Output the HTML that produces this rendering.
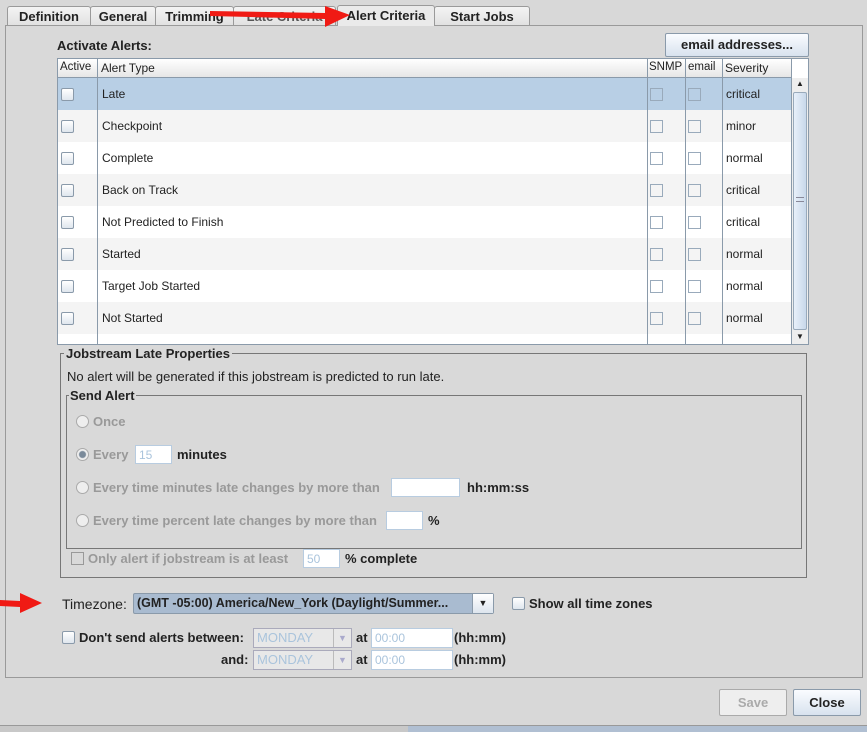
<!DOCTYPE html>
<html><head><meta charset="utf-8">
<style>
*{box-sizing:border-box;margin:0;padding:0}
body{width:867px;height:732px;background:#d8d8d8;font-family:"Liberation Sans",sans-serif;font-size:13px;color:#222;position:relative;overflow:hidden}
.a{position:absolute}
.b{font-weight:bold}
.t{font-size:12px}
.tab{position:absolute;top:6px;height:20px;border:1px solid #9a9a9a;border-bottom:none;background:linear-gradient(#f4f4f4,#e0e0e0);font-weight:bold;font-size:13px;text-align:center;line-height:19px;border-radius:3px 3px 0 0}
.cb{position:absolute;width:13px;height:13px;border:1px solid #8a9aaa;background:linear-gradient(#fff,#dfe6ee);border-radius:2px}
.cbd{position:absolute;width:13px;height:13px;border:1px solid #9ab;background:transparent}
.row{position:absolute;left:58px;width:733px;height:32px}
.gr{color:#999;font-weight:bold}
.rad{position:absolute;width:13px;height:13px;border:1px solid #aaa;border-radius:50%;background:#eee}
.inp{position:absolute;background:#fff;border:1px solid #b8cce0;color:#aac4dc;padding-left:3px;line-height:18px;font-size:12px}
.btn{position:absolute;border:1px solid #8a9aaa;background:linear-gradient(#fafcff,#d8e2ee);font-weight:bold;font-size:13px;text-align:center;border-radius:2px}
</style></head><body>
<div class="tab" style="left:7px;width:84px">Definition</div>
<div class="tab" style="left:90px;width:66px">General</div>
<div class="tab" style="left:155px;width:79px">Trimming</div>
<div class="tab" style="left:233px;width:103px;color:#555">Late Criteria</div>
<div class="tab" style="left:434px;width:96px">Start Jobs</div>
<div class="a" style="left:5px;top:25px;width:858px;height:653px;border:1px solid #9a9a9a;background:#d9d9d9"></div>
<div class="tab" style="left:337px;top:5px;height:21px;width:98px;background:#eaeaea;border-color:#9a9a9a;z-index:2">Alert Criteria</div>
<div class="a b" style="left:57px;top:38px;font-size:13px">Activate Alerts:</div>
<div class="btn" style="left:665px;top:33px;width:144px;height:24px;line-height:22px">email addresses...</div>
<div class="a" style="left:57px;top:58px;width:752px;height:287px;border:1px solid #8a9aaa;background:#fff"></div>
<div class="a" style="left:58px;top:59px;width:733px;height:19px;background:linear-gradient(#fff,#e6e6e6);border-bottom:1px solid #8a9aaa"></div>
<div class="a" style="left:60px;top:61px;font-size:11.5px">Active</div>
<div class="a t" style="left:101px;top:61px">Alert Type</div>
<div class="a" style="left:649px;top:61px;font-size:11.5px">SNMP</div>
<div class="a" style="left:688px;top:61px;font-size:11.5px">email</div>
<div class="a t" style="left:725px;top:61px">Severity</div>
<div class="row" style="top:78px;background:#b8cfe5"></div>
<div class="row" style="top:110px;background:#f4f4f4"></div>
<div class="row" style="top:142px;background:#fff"></div>
<div class="row" style="top:174px;background:#f4f4f4"></div>
<div class="row" style="top:206px;background:#fff"></div>
<div class="row" style="top:238px;background:#f4f4f4"></div>
<div class="row" style="top:270px;background:#fff"></div>
<div class="row" style="top:302px;background:#f4f4f4"></div>
<div class="row" style="top:334px;height:10px;background:#fff"></div>
<div class="a" style="left:97px;top:59px;width:1px;height:285px;background:#8a9aaa"></div>
<div class="a" style="left:647px;top:59px;width:1px;height:285px;background:#8a9aaa"></div>
<div class="a" style="left:685px;top:59px;width:1px;height:285px;background:#8a9aaa"></div>
<div class="a" style="left:722px;top:59px;width:1px;height:285px;background:#8a9aaa"></div>
<div class="a" style="left:791px;top:59px;width:1px;height:285px;background:#8a9aaa"></div>
<div class="a" style="left:792px;top:78px;width:16px;height:266px;background:#eee"></div>
<div class="a" style="left:793px;top:92px;width:14px;height:238px;border:1px solid #9ab;background:linear-gradient(90deg,#e8f0fa,#c8d8ea);border-radius:2px"></div>
<div class="a" style="left:796px;top:79px;font-size:8px">▲</div>
<div class="a" style="left:796px;top:332px;font-size:8px">▼</div>
<div class="a" style="left:796px;top:197px;width:8px;height:5px;border-top:1px solid #889;border-bottom:1px solid #889"></div>
<div class="cb" style="left:61px;top:88px"></div><div class="a t" style="left:102px;top:87px">Late</div><div class="cbd" style="left:650px;top:88px"></div><div class="cbd" style="left:688px;top:88px"></div><div class="a t" style="left:726px;top:87px">critical</div>
<div class="cb" style="left:61px;top:120px"></div><div class="a t" style="left:102px;top:119px">Checkpoint</div><div class="cbd" style="left:650px;top:120px"></div><div class="cbd" style="left:688px;top:120px"></div><div class="a t" style="left:726px;top:119px">minor</div>
<div class="cb" style="left:61px;top:152px"></div><div class="a t" style="left:102px;top:151px">Complete</div><div class="cbd" style="left:650px;top:152px"></div><div class="cbd" style="left:688px;top:152px"></div><div class="a t" style="left:726px;top:151px">normal</div>
<div class="cb" style="left:61px;top:184px"></div><div class="a t" style="left:102px;top:183px">Back on Track</div><div class="cbd" style="left:650px;top:184px"></div><div class="cbd" style="left:688px;top:184px"></div><div class="a t" style="left:726px;top:183px">critical</div>
<div class="cb" style="left:61px;top:216px"></div><div class="a t" style="left:102px;top:215px">Not Predicted to Finish</div><div class="cbd" style="left:650px;top:216px"></div><div class="cbd" style="left:688px;top:216px"></div><div class="a t" style="left:726px;top:215px">critical</div>
<div class="cb" style="left:61px;top:248px"></div><div class="a t" style="left:102px;top:247px">Started</div><div class="cbd" style="left:650px;top:248px"></div><div class="cbd" style="left:688px;top:248px"></div><div class="a t" style="left:726px;top:247px">normal</div>
<div class="cb" style="left:61px;top:280px"></div><div class="a t" style="left:102px;top:279px">Target Job Started</div><div class="cbd" style="left:650px;top:280px"></div><div class="cbd" style="left:688px;top:280px"></div><div class="a t" style="left:726px;top:279px">normal</div>
<div class="cb" style="left:61px;top:312px"></div><div class="a t" style="left:102px;top:311px">Not Started</div><div class="cbd" style="left:650px;top:312px"></div><div class="cbd" style="left:688px;top:312px"></div><div class="a t" style="left:726px;top:311px">normal</div>
<div class="a" style="left:60px;top:353px;width:747px;height:225px;border:1px solid #777"></div>
<div class="a b" style="left:64px;top:346px;background:#d9d9d9;padding:0 2px">Jobstream Late Properties</div>
<div class="a" style="left:67px;top:369px">No alert will be generated if this jobstream is predicted to run late.</div>
<div class="a" style="left:66px;top:395px;width:736px;height:154px;border:1px solid #777"></div>
<div class="a b" style="left:69px;top:388px;background:#d9d9d9;padding:0 1px">Send Alert</div>
<div class="rad" style="left:76px;top:415px"></div><div class="a gr" style="left:93px;top:414px">Once</div>
<div class="rad" style="left:76px;top:448px;background:radial-gradient(circle,#7a8a9a 0 3px,#eee 4px)"></div><div class="a gr" style="left:93px;top:447px">Every</div>
<div class="inp" style="left:135px;top:445px;width:37px;height:19px">15</div><div class="a b" style="left:177px;top:447px">minutes</div>
<div class="rad" style="left:76px;top:481px"></div><div class="a gr" style="left:93px;top:480px">Every time minutes late changes by more than</div>
<div class="inp" style="left:391px;top:478px;width:69px;height:19px"></div><div class="a b" style="left:467px;top:480px">hh:mm:ss</div>
<div class="rad" style="left:76px;top:514px"></div><div class="a gr" style="left:93px;top:513px">Every time percent late changes by more than</div>
<div class="inp" style="left:386px;top:511px;width:37px;height:19px"></div><div class="a b" style="left:428px;top:513px">%</div>
<div class="cbd" style="left:71px;top:552px;border-color:#999"></div><div class="a gr" style="left:88px;top:551px">Only alert if jobstream is at least</div>
<div class="inp" style="left:303px;top:549px;width:37px;height:19px">50</div><div class="a b" style="left:345px;top:551px">% complete</div>
<div class="a" style="left:62px;top:596px;font-size:14px">Timezone:</div>
<div class="a" style="left:133px;top:593px;width:361px;height:21px;border:1px solid #8a9aaa;background:#a9bbd0;border-radius:2px"></div>
<div class="a b" style="left:137px;top:596px;font-size:12.5px;white-space:nowrap">(GMT -05:00) America/New_York (Daylight/Summer...</div>
<div class="a" style="left:472px;top:594px;width:21px;height:19px;background:linear-gradient(#fff,#dde5ee);border-left:1px solid #8a9aaa;text-align:center;font-size:9px;line-height:19px">▼</div>
<div class="cb" style="left:512px;top:597px"></div><div class="a b" style="left:529px;top:596px">Show all time zones</div>
<div class="cb" style="left:62px;top:631px"></div><div class="a b" style="left:79px;top:630px">Don't send alerts between:</div>
<div class="a" style="left:253px;top:628px;width:99px;height:20px;border:1px solid #aab;background:#e8e8e8;color:#aac4dc;padding-left:3px;line-height:18px">MONDAY</div>
<div class="a" style="left:333px;top:629px;width:18px;height:18px;border-left:1px solid #bbb;color:#aac;font-size:9px;text-align:center;line-height:18px">▼</div>
<div class="a b" style="left:356px;top:630px">at</div><div class="inp" style="left:371px;top:628px;width:82px;height:20px">00:00</div><div class="a b" style="left:454px;top:630px">(hh:mm)</div>
<div class="a b" style="left:221px;top:652px">and:</div>
<div class="a" style="left:253px;top:650px;width:99px;height:20px;border:1px solid #aab;background:#e8e8e8;color:#aac4dc;padding-left:3px;line-height:18px">MONDAY</div>
<div class="a" style="left:333px;top:651px;width:18px;height:18px;border-left:1px solid #bbb;color:#aac;font-size:9px;text-align:center;line-height:18px">▼</div>
<div class="a b" style="left:356px;top:652px">at</div><div class="inp" style="left:371px;top:650px;width:82px;height:20px">00:00</div><div class="a b" style="left:454px;top:652px">(hh:mm)</div>
<div class="btn" style="left:719px;top:689px;width:68px;height:27px;line-height:25px;color:#aaa;background:#eee;border-color:#aaa">Save</div>
<div class="btn" style="left:793px;top:689px;width:68px;height:27px;line-height:25px">Close</div>
<div class="a" style="left:0;top:725px;width:867px;height:7px;background:#c8c8c8;border-top:1px solid #999"></div>
<div class="a" style="left:408px;top:726px;width:459px;height:6px;background:#b0bfd2"></div>
<svg class="a" style="left:0;top:0;z-index:5" width="867" height="732">
<polygon points="210,11 325,13 325,6 350,15 325,27 325,19 210,16" fill="#f01a14"/>
<polygon points="0,600 20,601 20,593 42,603 20,613 20,607 0,606" fill="#f01a14"/>
</svg>
</body></html>
